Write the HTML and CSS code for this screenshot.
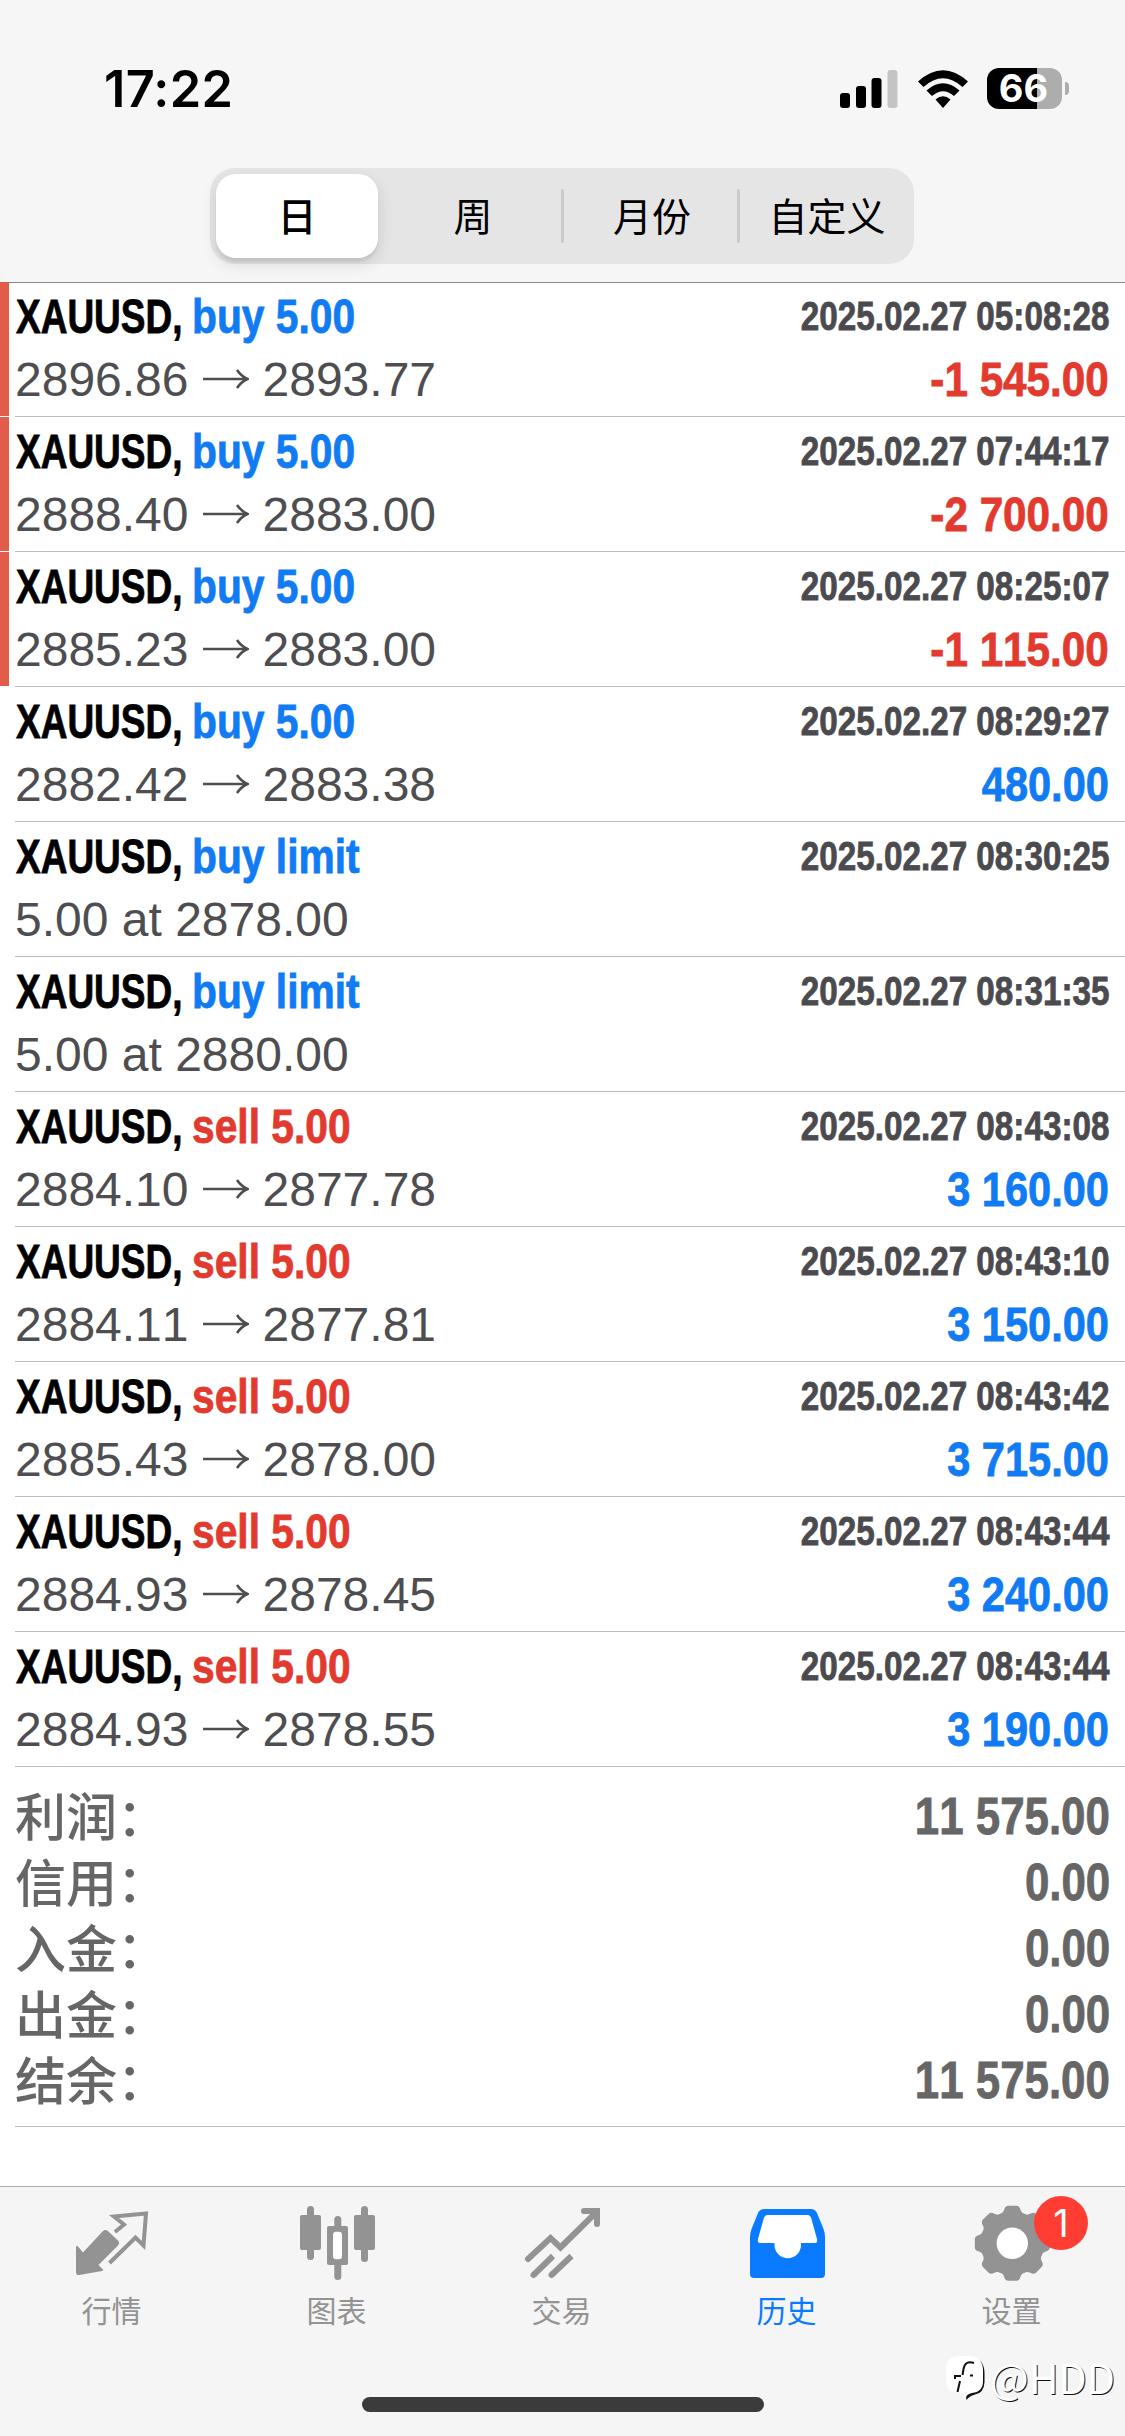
FILE: index.html
```
<!DOCTYPE html>
<html lang="zh-CN">
<head>
<meta charset="utf-8">
<title>历史</title>
<link rel="stylesheet" href="styles.css">
</head>
<body>
<div class="app">
  <header class="header">
    <div class="status">
      <span class="clock">17:22</span>
      <div class="indicators">
        <svg class="signal" width="60" height="44" viewBox="0 0 60 44">
          <rect x="1" y="26" width="10" height="15" rx="3"/><rect x="17" y="19" width="10" height="22" rx="3"/><rect x="32.500" y="11" width="10" height="30" rx="3"/><rect x="48.500" y="3" width="10" height="38" rx="3" fill="#c4c4c4"/>
        </svg>
        <svg class="wifi" width="52" height="44" viewBox="0 0 52 44">
          <path d="M1 14.500Q26 -8 51 14.500L45.500 20Q26 2.500 6.500 20Z"/>
          <path d="M9.500 23.500Q26 9 42.500 23.500L37 29Q26 19.500 15 29Z"/>
          <path d="M18.500 32.500Q26 26 33.500 32.500L26 41Z"/>
        </svg>
        <div class="battery"><span class="battery-body">66</span><i class="battery-nub"></i></div>
      </div>
    </div>
    <nav class="segments">
      <span class="segment active">日</span><span class="segment">周</span><span class="segment">月份</span><span class="segment">自定义</span>
    </nav>
  </header>

  <main class="list">
    <article class="deal loss">
      <div class="line"><span class="symbol">XAUUSD,</span><span class="side buy">buy 5.00</span><time class="time">2025.02.27 05:08:28</time></div>
      <div class="line"><span class="price">2896.86<svg class="arrow" viewBox="0 0 46 20"><path d="M0 10H44M34 1Q38 7 44.500 10Q38 13 34 19"/></svg>2893.77</span><span class="amount minus">-1 545.00</span></div>
    </article>
    <article class="deal loss">
      <div class="line"><span class="symbol">XAUUSD,</span><span class="side buy">buy 5.00</span><time class="time">2025.02.27 07:44:17</time></div>
      <div class="line"><span class="price">2888.40<svg class="arrow" viewBox="0 0 46 20"><path d="M0 10H44M34 1Q38 7 44.500 10Q38 13 34 19"/></svg>2883.00</span><span class="amount minus">-2 700.00</span></div>
    </article>
    <article class="deal loss">
      <div class="line"><span class="symbol">XAUUSD,</span><span class="side buy">buy 5.00</span><time class="time">2025.02.27 08:25:07</time></div>
      <div class="line"><span class="price">2885.23<svg class="arrow" viewBox="0 0 46 20"><path d="M0 10H44M34 1Q38 7 44.500 10Q38 13 34 19"/></svg>2883.00</span><span class="amount minus">-1 115.00</span></div>
    </article>
    <article class="deal">
      <div class="line"><span class="symbol">XAUUSD,</span><span class="side buy">buy 5.00</span><time class="time">2025.02.27 08:29:27</time></div>
      <div class="line"><span class="price">2882.42<svg class="arrow" viewBox="0 0 46 20"><path d="M0 10H44M34 1Q38 7 44.500 10Q38 13 34 19"/></svg>2883.38</span><span class="amount">480.00</span></div>
    </article>
    <article class="deal">
      <div class="line"><span class="symbol">XAUUSD,</span><span class="side buy">buy limit</span><time class="time">2025.02.27 08:30:25</time></div>
      <div class="line"><span class="price">5.00 at 2878.00</span></div>
    </article>
    <article class="deal">
      <div class="line"><span class="symbol">XAUUSD,</span><span class="side buy">buy limit</span><time class="time">2025.02.27 08:31:35</time></div>
      <div class="line"><span class="price">5.00 at 2880.00</span></div>
    </article>
    <article class="deal">
      <div class="line"><span class="symbol">XAUUSD,</span><span class="side sell">sell 5.00</span><time class="time">2025.02.27 08:43:08</time></div>
      <div class="line"><span class="price">2884.10<svg class="arrow" viewBox="0 0 46 20"><path d="M0 10H44M34 1Q38 7 44.500 10Q38 13 34 19"/></svg>2877.78</span><span class="amount">3 160.00</span></div>
    </article>
    <article class="deal">
      <div class="line"><span class="symbol">XAUUSD,</span><span class="side sell">sell 5.00</span><time class="time">2025.02.27 08:43:10</time></div>
      <div class="line"><span class="price">2884.11<svg class="arrow" viewBox="0 0 46 20"><path d="M0 10H44M34 1Q38 7 44.500 10Q38 13 34 19"/></svg>2877.81</span><span class="amount">3 150.00</span></div>
    </article>
    <article class="deal">
      <div class="line"><span class="symbol">XAUUSD,</span><span class="side sell">sell 5.00</span><time class="time">2025.02.27 08:43:42</time></div>
      <div class="line"><span class="price">2885.43<svg class="arrow" viewBox="0 0 46 20"><path d="M0 10H44M34 1Q38 7 44.500 10Q38 13 34 19"/></svg>2878.00</span><span class="amount">3 715.00</span></div>
    </article>
    <article class="deal">
      <div class="line"><span class="symbol">XAUUSD,</span><span class="side sell">sell 5.00</span><time class="time">2025.02.27 08:43:44</time></div>
      <div class="line"><span class="price">2884.93<svg class="arrow" viewBox="0 0 46 20"><path d="M0 10H44M34 1Q38 7 44.500 10Q38 13 34 19"/></svg>2878.45</span><span class="amount">3 240.00</span></div>
    </article>
    <article class="deal">
      <div class="line"><span class="symbol">XAUUSD,</span><span class="side sell">sell 5.00</span><time class="time">2025.02.27 08:43:44</time></div>
      <div class="line"><span class="price">2884.93<svg class="arrow" viewBox="0 0 46 20"><path d="M0 10H44M34 1Q38 7 44.500 10Q38 13 34 19"/></svg>2878.55</span><span class="amount">3 190.00</span></div>
    </article>
    <section class="summary">
      <div class="total"><span>利润：</span><b>11 575.00</b></div>
      <div class="total"><span>信用：</span><b>0.00</b></div>
      <div class="total"><span>入金：</span><b>0.00</b></div>
      <div class="total"><span>出金：</span><b>0.00</b></div>
      <div class="total"><span>结余：</span><b>11 575.00</b></div>
    </section>
  </main>

  <footer class="tabbar">
    <div class="tabs">
      <div class="tab">
        <svg width="90" height="90" viewBox="0 0 90 90">
          <path fill="currentColor" stroke="currentColor" stroke-width="2" stroke-linejoin="round" d="M10 50L16 57L36 35.500Q38 33 40.500 35L50.500 44.500Q52 46 50 48L30 68L35 73L12 77Q10 77.500 10 75Z"/>
          <path fill="none" stroke="currentColor" stroke-width="4" d="M48 35L57 27.500L47 19.500L79 16.500L76.500 48.500L68.500 40.500L42.500 66"/>
        </svg>
        <span>行情</span>
      </div>
      <div class="tab">
        <svg width="90" height="90" viewBox="0 0 90 90" fill="currentColor">
          <rect x="8" y="18" width="21" height="35" rx="2"/><rect x="15" y="9" width="7" height="54" rx="3.500"/>
          <rect x="42.300" y="19" width="7" height="64" rx="3.500"/><rect x="35" y="29" width="21" height="39" rx="2"/><rect x="41" y="34.700" width="9" height="27.600" rx="3" fill="#fff"/>
          <rect x="62" y="18" width="21" height="35" rx="2"/><rect x="69" y="9" width="7" height="56" rx="3.500"/>
        </svg>
        <span>图表</span>
      </div>
      <div class="tab">
        <svg width="90" height="90" viewBox="0 0 90 90" fill="none" stroke="currentColor" stroke-width="6" stroke-linecap="round">
          <path d="M11 62L33.500 41L43.500 50.500L79 15.500M67 14H80V27"/>
          <path stroke-linecap="butt" d="M16.500 78L36 59M34.500 78L54.500 59"/>
          <path d="M16.500 78L17 77.500M34.500 78L35 77.500"/>
        </svg>
        <span>交易</span>
      </div>
      <div class="tab current">
        <svg width="90" height="90" viewBox="0 0 90 90">
          <path fill="currentColor" d="M22 12H69Q73 12 75 16L81.500 32Q83 36 83 40V77Q83 81 79 81H12Q8 81 8 77V40Q8 36 9.500 32L16 16Q18 12 22 12Z"/>
          <path fill="#fff" d="M25 18H66Q68 18 69 20.500L75 42Q76 46 73 46H59V49A13.300 13.300 0 0 1 32.500 49V46H18Q15 46 16 42L22 20.500Q23 18 25 18Z"/>
        </svg>
        <span>历史</span>
      </div>
      <div class="tab">
        <svg width="90" height="90" viewBox="0 0 90 90">
          <g fill="currentColor" transform="translate(45.300 46.300)">
            <circle r="31.500"/>
            <g id="teeth"><path id="tooth" d="M-13 -29Q-9 -30 -8 -34Q-7 -37.500 -4 -37.500H4Q7 -37.500 8 -34Q9 -30 13 -29V0H-13Z"/>
            <use href="#tooth" transform="rotate(45)"/><use href="#tooth" transform="rotate(90)"/><use href="#tooth" transform="rotate(135)"/><use href="#tooth" transform="rotate(180)"/><use href="#tooth" transform="rotate(225)"/><use href="#tooth" transform="rotate(270)"/><use href="#tooth" transform="rotate(315)"/></g>
            <circle r="15.700" fill="#fff"/>
          </g>
        </svg>
        <span>设置</span>
        <i class="badge">1</i>
      </div>
    </div>
    <div class="home"></div>
    <div class="watermark">
      <svg width="42" height="50" viewBox="0 0 42 50">
        <path fill="#111" d="M13 2H28Q39 4 39.500 18V27Q39 38 30 39.500Q24 41 21.500 45Q20 41 24 37Z"/>
        <path fill="#fff" d="M13 1H26Q38 2 38 16V26Q38 37 27 38Q22 39 20 43L18 38H13Q1 37 1 25V13Q1 2 13 1Z"/>
        <path fill="none" stroke="#111" stroke-width="2" d="M29 8Q20 5 18.500 14L17.500 20M10 24V21H16M15 26L12.500 37M25 20.500H28"/>
      </svg>
      <span>@HDD</span>
    </div>
  </footer>
</div>
</body>
</html>
```
FILE: styles.css
```
* { box-sizing: border-box; }
body {
  margin: 0;
  background: #fff;
  font-family: "Liberation Sans", "Noto Sans CJK SC", sans-serif;
  font-kerning: none;
}
.app { width: 1125px; height: 2436px; display: flex; flex-direction: column; overflow: hidden; }

.header { height: 283px; flex: none; background: #f6f6f6; border-bottom: 1px solid #888; }
.status { height: 168px; padding: 0 56px 0 104px; display: flex; justify-content: space-between; }
.clock { font: 600 50.5px/60px Inter, sans-serif; margin-top: 59px; letter-spacing: 0.3px; }
.indicators { display: flex; align-items: flex-start; margin-top: 67px; }
.wifi { margin-left: 18px; }
.battery { display: flex; align-items: center; margin: 1px 0 0 18px; gap: 3px; }
.battery-body {
  width: 75px; height: 41px; border-radius: 12px; color: #fff; text-align: center; padding-right: 2px;
  background: linear-gradient(90deg, #000 50px, #adadad 50px);
  font: 700 38px/41px Inter, sans-serif;
}
.battery-nub { width: 4px; height: 13px; border-radius: 0 4px 4px 0; background: #adadad; }

.segments {
  width: 704px; height: 96px; margin-left: 210px; padding: 6px 0 6px 6px;
  border-radius: 25px; background: #e5e5e6; display: grid;
  grid-template-columns: 162px 186px 176px 1fr;
}
.segment { position: relative; font: 400 39px/81px "Noto Sans CJK SC", sans-serif; text-align: center; }
.segment:nth-child(2) { padding-left: 4px; }
.segment.active { background: #fff; border-radius: 20px; font-weight: 500; box-shadow: 0 6px 16px rgba(0,0,0,.12), 0 4px 2px rgba(0,0,0,.06); }
.segment:not(:last-child):not(.active)::after {
  content: ""; position: absolute; right: 0; top: 15px; width: 3px; height: 54px; border-radius: 2px; background: #cbcbcc;
}

.list { flex: 1; margin-top: -1px; }
.deal { height: 135px; padding: 6px 16px 0 14px; position: relative; }
.deal::after { content: ""; position: absolute; left: 15px; right: 0; bottom: 0; height: 1px; background: #bcbcbf; }
.loss::before { content: ""; position: absolute; left: 0; top: 0; width: 9px; height: 134px; background: #e25c4c; }
.line { display: flex; height: 64px; white-space: nowrap; }
.symbol, .side, .time, .amount, .total b { font-weight: 700; -webkit-text-stroke: 0.8px currentColor; }
.symbol { font-size: 49px; line-height: 56px; width: 176px; margin-left: 2px; transform: scaleX(.755); transform-origin: 0 0; }
.side { font-size: 49px; line-height: 56px; transform: scaleX(.832); transform-origin: 0 0; }
.buy, .amount { color: #107bf3; }
.sell, .minus { color: #e23a2e; }
.time { margin-left: auto; font-size: 40px; line-height: 56px; color: #4b4b4f; transform: scaleX(.831); transform-origin: 100% 0; }
.price { font-size: 48px; line-height: 56px; color: #4e4e51; margin-left: 1px; }
.arrow { width: 46px; height: 20px; margin: 0 14px; vertical-align: 7px; fill: none; stroke: #4e4e51; stroke-width: 2.6px; }
.amount { margin-left: auto; font-size: 48px; line-height: 56px; transform: scaleX(.865); transform-origin: 100% 0; }
.minus { transform: scaleX(.88); }

.summary { height: 360px; padding: 17px 15px 0 15px; position: relative; color: #666; }
.summary::after { content: ""; position: absolute; left: 15px; right: 0; bottom: 0; height: 1px; background: #bcbcbf; }
.total { display: flex; justify-content: space-between; height: 66px; line-height: 66px; font-size: 51px; white-space: nowrap; }
.total span { font-family: "Noto Sans CJK SC", sans-serif; font-weight: 500; line-height: 60px; }
.total b { transform: scaleX(.86); transform-origin: 100% 0; }

.tabbar { height: 250px; flex: none; position: relative; background: #f5f5f5; border-top: 1px solid #acacac; }
.tabs { display: grid; grid-template-columns: repeat(5, 225px); margin-left: -1px; padding-top: 10px; }
.tab { position: relative; display: flex; flex-direction: column; align-items: center; color: #939393; }
.tab svg { display: block; }
.tab span { font: 400 30px/40px "Noto Sans CJK SC", sans-serif; margin-top: 2px; }
.current { color: #0a7aff; }
.badge {
  position: absolute; left: 135px; top: -1px; width: 54px; height: 54px; border-radius: 50%;
  background: #ff3d33; color: #fff; text-align: center; font: 400 38px/54px Inter, sans-serif;
}
.home { width: 402px; height: 15px; margin: 68px auto 0; border-radius: 8px; background: #3b3b3b; }
.watermark { position: absolute; right: 10px; top: 168px; display: flex; align-items: flex-start; gap: 3px; }
.watermark span { font: 400 41px/42px "Noto Sans CJK SC", sans-serif; color: #fff; text-shadow: 1px 1px 0 #111; }
```
